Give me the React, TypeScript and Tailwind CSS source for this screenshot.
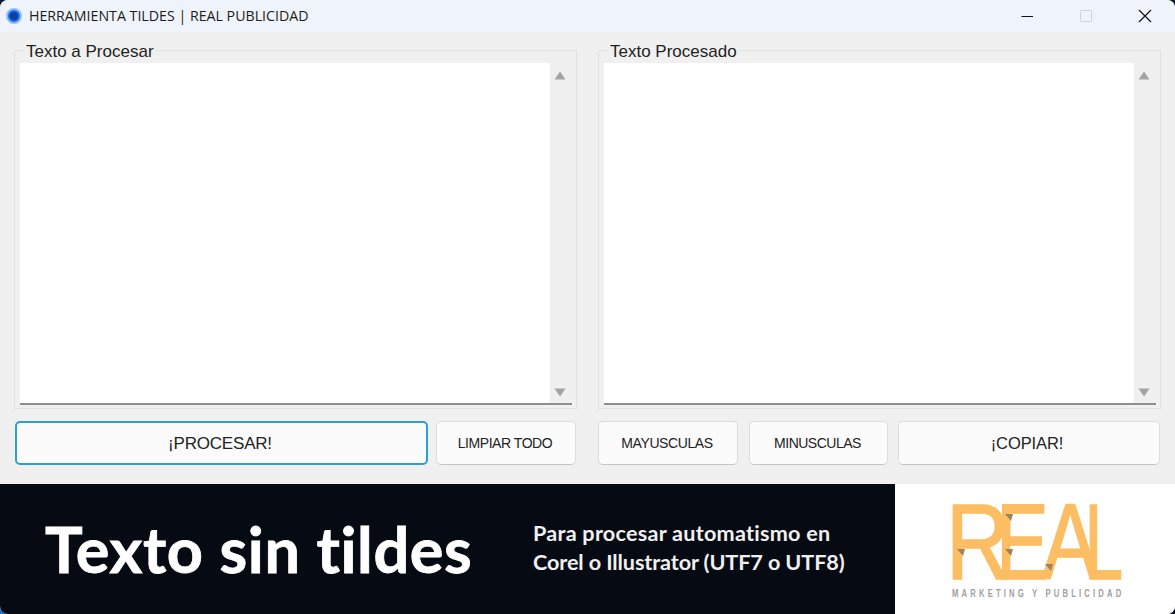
const uiFont = { fontFamily: '"Liberation Sans", Arial, sans-serif' };

function ArrowUp() {
  return (
    <svg width="12" height="9" viewBox="0 0 12 9">
      <path d="M6 0.5 L11.5 8.5 L0.5 8.5 Z" fill="#a3a3a3" />
    </svg>
  );
}

function ArrowDown() {
  return (
    <svg width="12" height="9" viewBox="0 0 12 9">
      <path d="M6 8.5 L11.5 0.5 L0.5 0.5 Z" fill="#a3a3a3" />
    </svg>
  );
}

function GroupBox({ title }: { title: string }) {
  return (
    <div className="relative h-[359px] border border-[#e2e2e2] pl-[5px] pr-[4px] pt-[12px] pb-[3px]">
      <span className="absolute left-[10px] top-[-9px] bg-[#f0f0f0] px-[1px] text-[17px] leading-[20px] text-[#222]">
        {title}
      </span>
      <div className="flex h-full border-b-2 border-[#8f8f8f] bg-white">
        <div className="flex-1" />
        <div className="flex w-[22px] flex-col items-center justify-between bg-[#f0f0f0] pt-[8px] pb-[6px] pr-[2px]">
          <ArrowUp />
          <ArrowDown />
        </div>
      </div>
    </div>
  );
}

function Btn({ label, className }: { label: string; className: string }) {
  return (
    <button
      className={
        "h-[44px] rounded-[5px] border border-[#dcdcdc] border-b-[#c4c4c4] bg-[#fbfbfb] text-[#222] " +
        className
      }
    >
      {label}
    </button>
  );
}

function RealLogo() {
  return (
    <svg width="280" height="130" viewBox="0 0 280 130">
      <g
        fill="#fdbd62"
        stroke="#fdbd62"
        strokeWidth="1.5"
        fontFamily='"Liberation Sans", Arial, sans-serif'
        fontSize="107"
      >
        <text transform="translate(51 95) scale(.83 1)">R</text>
        <text transform="translate(101 95) scale(.74 1)">E</text>
        <text transform="translate(147 95) scale(.79 1)">A</text>
        <text transform="translate(189.5 95) scale(.65 1)">L</text>
      </g>
      <g fill="#9a8560">
        <path d="M110 30 L118 30 L116 37 Z" />
        <path d="M62 65 L70 65 L68 72 Z" />
        <path d="M110 65 L118 65 L116 72 Z" />
        <path d="M150 80 L158 80 L156 87 Z" />
      </g>
      <text
        transform="translate(57 113) scale(.7 1)"
        fill="#a0a0a0"
        fontFamily='"Liberation Sans", Arial, sans-serif'
        fontSize="11"
        fontWeight="700"
        letterSpacing="4.5"
      >
        MARKETING Y PUBLICIDAD
      </text>
    </svg>
  );
}

export default function App() {
  return (
    <div className="h-[614px] w-[1175px] bg-[radial-gradient(circle_at_0_100%,#1a73c8_12px,#0b1a33_12px)]">
      <div className="flex h-full flex-col overflow-hidden rounded-[8px] bg-[#f0f0f0]" style={uiFont}>
        {/* title bar */}
        <div className="flex h-[32px] items-center bg-[#eff3fa] pl-[6px]">
          <span className="flex h-[16px] w-[16px] items-center justify-center rounded-full bg-[#93bdf5]">
            <span className="h-[12px] w-[12px] rounded-full border-[2px] border-[#0f6cf0] bg-[#123f9c]" />
          </span>
          <span
            className="ml-[7px] text-[14.2px] text-[#1c1c1c]"
            style={{ fontFamily: '"Open Sans", sans-serif' }}
          >
            HERRAMIENTA TILDES | REAL PUBLICIDAD
          </span>
          <div className="ml-auto flex items-center">
            <svg width="14" height="14" viewBox="0 0 14 14" className="mr-[45px]">
              <path d="M1.5 7.5 H13" stroke="#111" strokeWidth="1" />
            </svg>
            <svg width="14" height="14" viewBox="0 0 14 14" className="mr-[45px]">
              <rect x="1.5" y="1.5" width="11" height="11" rx="1" fill="none" stroke="#cfd2d8" />
            </svg>
            <svg width="14" height="14" viewBox="0 0 14 14" className="mr-[23px]">
              <path d="M1 1 L13 13 M13 1 L1 13" stroke="#111" strokeWidth="1.2" />
            </svg>
          </div>
        </div>

        {/* work area */}
        <div className="flex flex-1 flex-col px-[14px] pt-[18px]">
          <div className="grid grid-cols-2 gap-[21px]">
            <GroupBox title="Texto a Procesar" />
            <GroupBox title="Texto Procesado" />
          </div>
          <div className="mt-[12px] flex pl-[1px]">
            <button className="h-[44px] w-[413px] rounded-[5px] border-2 border-[#2b9fd8] bg-[#fbfbfb] pt-[1px] pr-[3px] text-[17px] tracking-[-0.2px] text-[#222]">
              ¡PROCESAR!
            </button>
            <Btn label="LIMPIAR TODO" className="ml-[8px] w-[140px] pr-[2px] text-[14px] tracking-[-0.45px]" />
            <Btn label="MAYUSCULAS" className="ml-[22px] w-[140px] pr-[2px] text-[14px] tracking-[-0.4px]" />
            <Btn label="MINUSCULAS" className="ml-[11px] w-[139px] pr-[2px] text-[14px] tracking-[-0.5px]" />
            <Btn label="¡COPIAR!" className="ml-[10px] w-[262px] pt-[1px] pr-[4px] text-[16.5px] tracking-[-0.1px]" />
          </div>
        </div>

        {/* banner */}
        <div className="flex h-[130px]">
          <div className="flex w-[895px] items-center bg-[#060a12] text-white" style={{ fontFamily: "Lato, sans-serif" }}>
            <span className="ml-[45px] w-[488px] pb-[2px] text-[63px] font-bold leading-none tracking-[0.6px] [-webkit-text-stroke:0.8px_white]">
              Texto sin tildes
            </span>
            <span className="pb-[2px] text-[21.6px] font-bold leading-[29px] text-[#f0f0f0]">
              <span className="block tracking-[0.25px]">Para procesar automatismo en</span>
              <span className="block tracking-[-0.1px]">Corel o Illustrator (UTF7 o UTF8)</span>
            </span>
          </div>
          <div className="flex-1 bg-white">
            <RealLogo />
          </div>
        </div>
      </div>
    </div>
  );
}
